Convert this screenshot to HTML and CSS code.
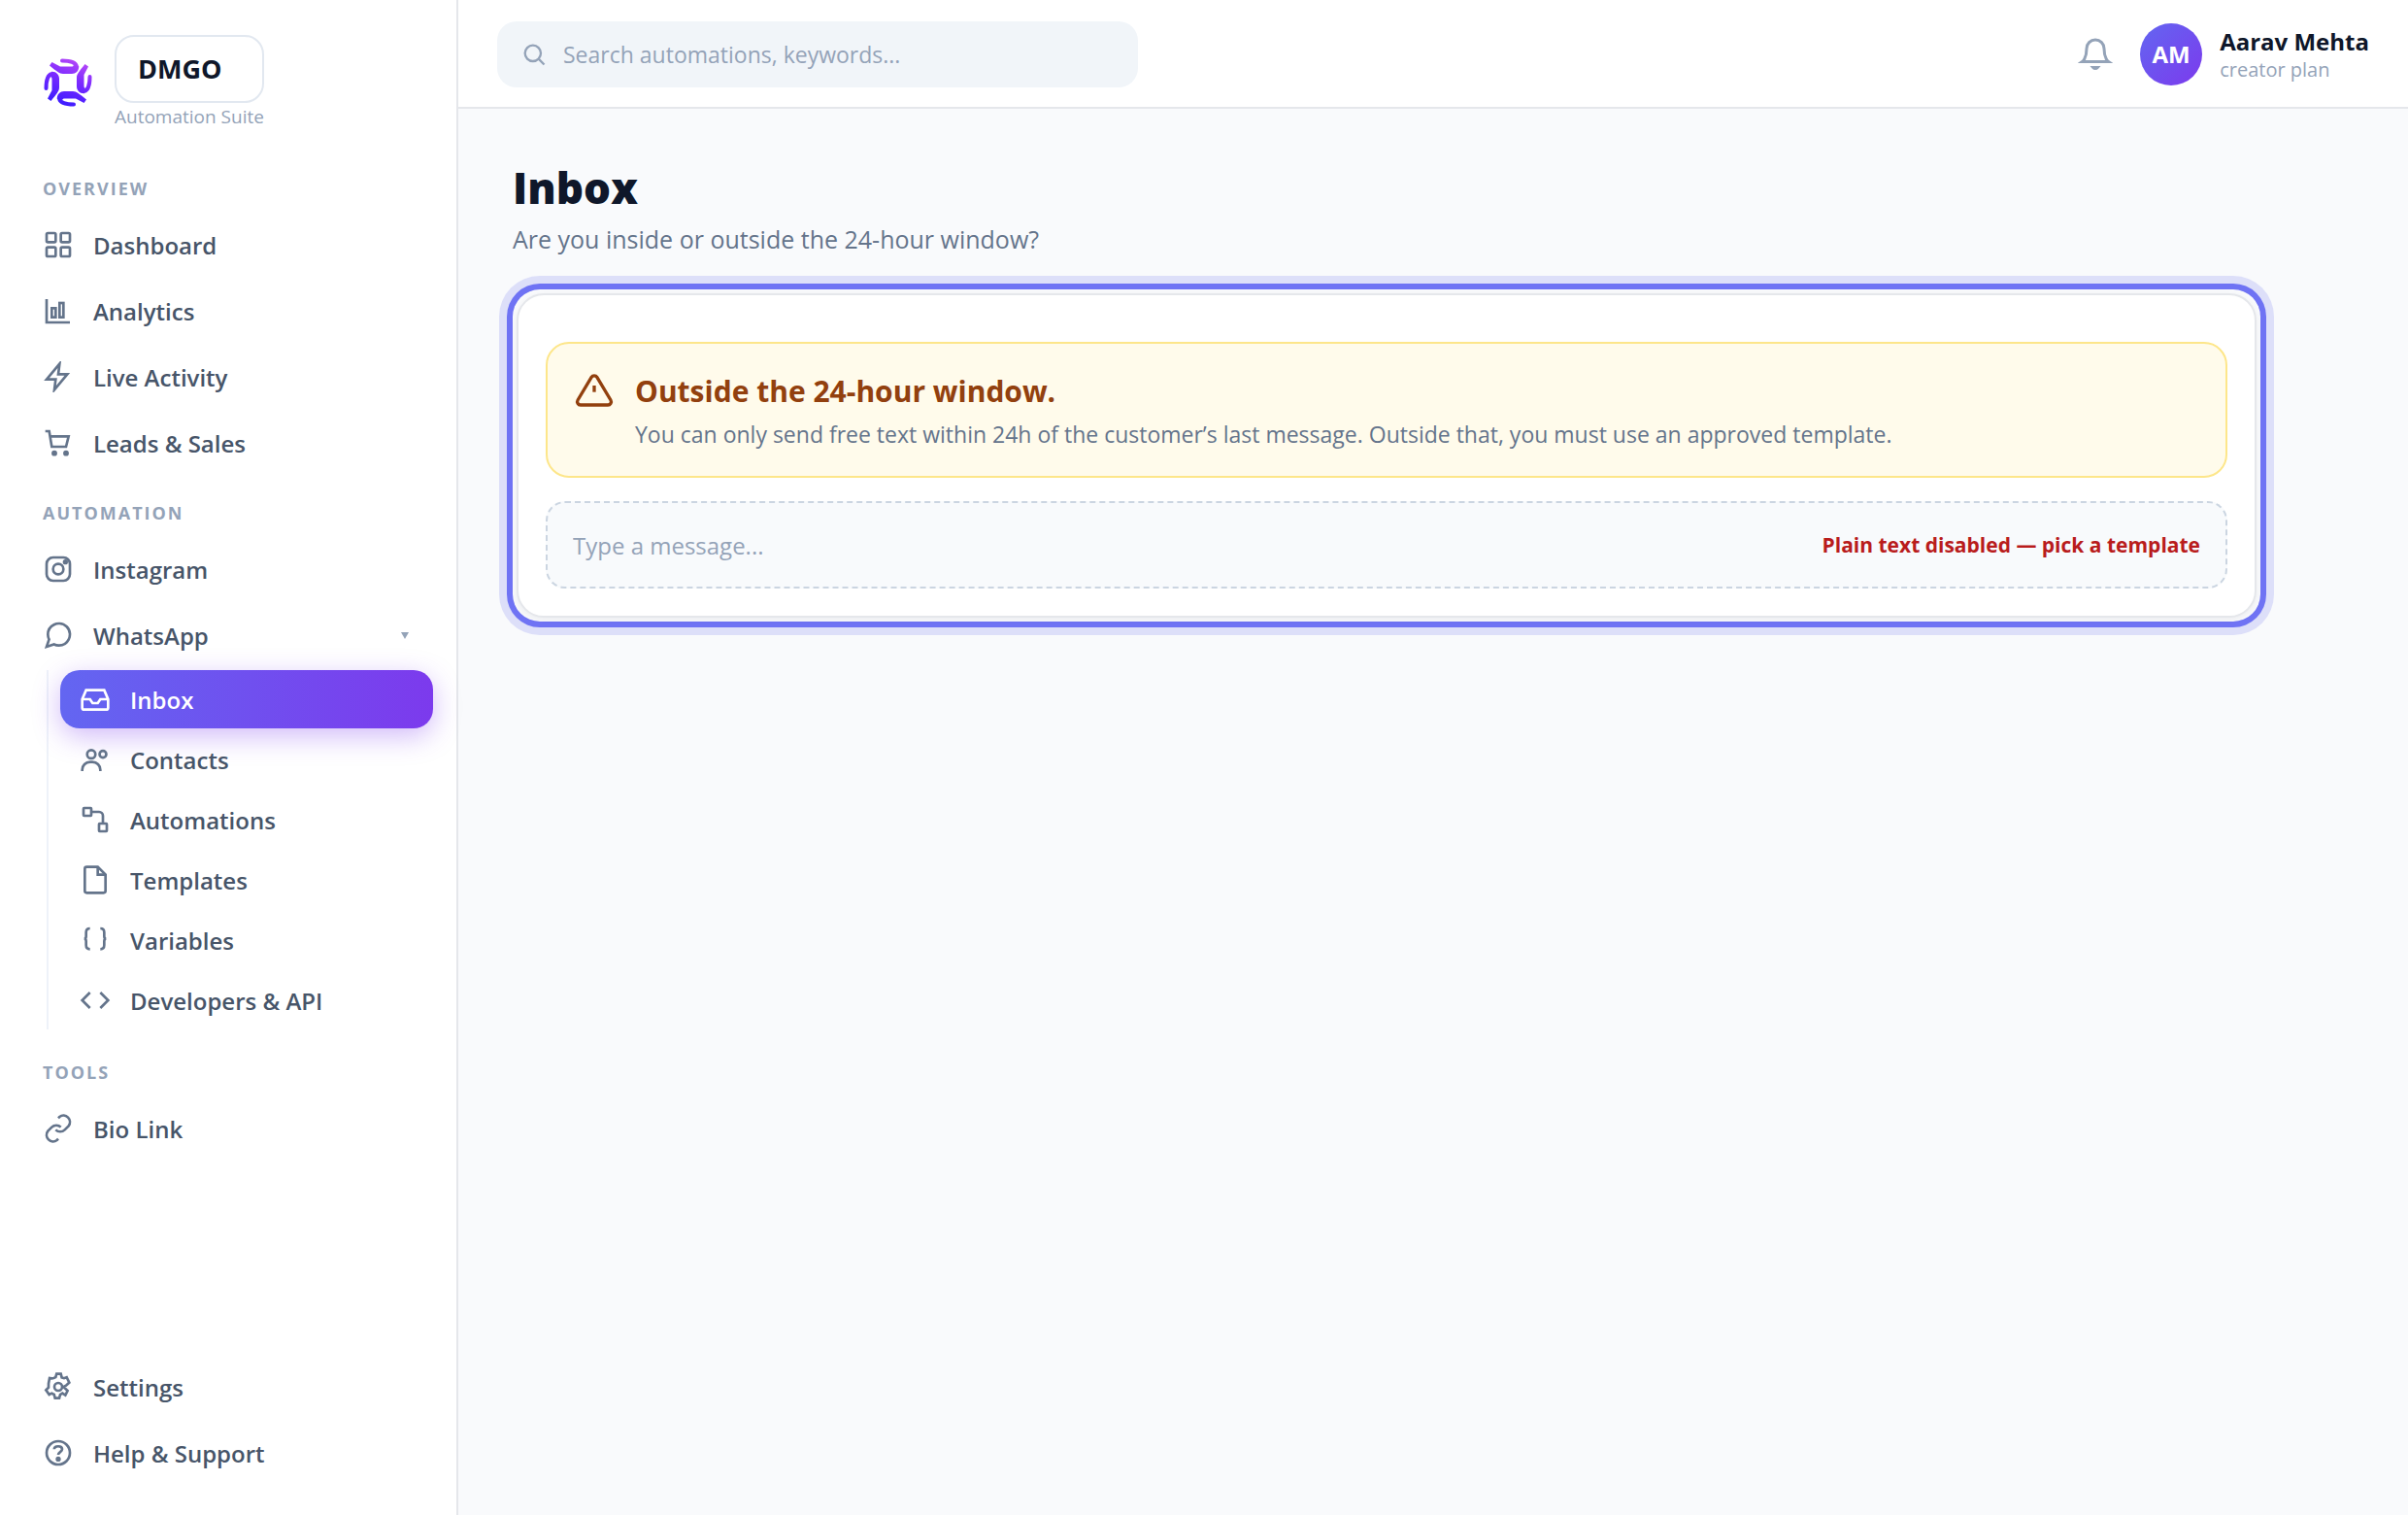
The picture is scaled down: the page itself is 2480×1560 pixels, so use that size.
FILE: index.html
```html
<!DOCTYPE html>
<html lang="en">
<head>
    <meta charset="UTF-8">
    <meta name="viewport" content="width=device-width, initial-scale=1.0">
    <title>DMGO - Inbox</title>
    <link rel="stylesheet" href="styles.css">
</head>
<body>
    <div class="app">
        <!-- Sidebar -->
        <aside class="sidebar">
            <div class="brand">
                <svg class="brand-mark" viewBox="-26 -26 52 52" aria-hidden="true">
                    <defs>
                        <linearGradient id="markFill" gradientUnits="userSpaceOnUse" x1="8" y1="-22" x2="-8" y2="22">
                            <stop offset="0" stop-color="#b145f8"/>
                            <stop offset="0.4" stop-color="#7d2bff"/>
                            <stop offset="1" stop-color="#3d1cff"/>
                        </linearGradient>
                        <g id="markArm">
                            <path d="M17.5 -19 L21 -16.5 L16.5 -8 V3 C16.5 5 17 6 18 5.5 L17 11.2 C12 11.5 9 8 9 4 V-5 C9 -9 12 -12 17.5 -19Z" fill="#fff"/>
                            <path d="M17 8.8 C20.5 8 22.5 2 22.5 -6" fill="none" stroke="#fff" stroke-width="4" stroke-linecap="round"/>
                        </g>
                        <mask id="markMask" maskUnits="userSpaceOnUse" x="-26" y="-26" width="52" height="52">
                            <use href="#markArm"/>
                            <use href="#markArm" transform="rotate(90)"/>
                            <use href="#markArm" transform="rotate(180)"/>
                            <use href="#markArm" transform="rotate(270)"/>
                        </mask>
                    </defs>
                    <rect x="-26" y="-26" width="52" height="52" fill="url(#markFill)" mask="url(#markMask)"/>
                </svg>
                <div class="brand-text">
                    <div class="brand-name">DMGO</div>
                    <div class="brand-sub">Automation Suite</div>
                </div>
            </div>

            <nav class="nav">
                <h2 class="nav-label">Overview</h2>
                <a class="nav-item" href="#">
                    <svg class="icon" viewBox="0 0 24 24"><rect x="3" y="3" width="7" height="7" rx="1"/><rect x="14" y="3" width="7" height="7" rx="1"/><rect x="3" y="14" width="7" height="7" rx="1"/><rect x="14" y="14" width="7" height="7" rx="1"/></svg>
                    Dashboard
                </a>
                <a class="nav-item" href="#">
                    <svg class="icon" viewBox="0 0 24 24"><path d="M3 3v18h18"/><rect x="7" y="10" width="3" height="7"/><rect x="13" y="6" width="3" height="11"/></svg>
                    Analytics
                </a>
                <a class="nav-item" href="#">
                    <svg class="icon" viewBox="0 0 24 24"><path d="M13 2 3 14h7l-1 8 10-12h-7z"/></svg>
                    Live Activity
                </a>
                <a class="nav-item" href="#">
                    <svg class="icon" viewBox="0 0 24 24"><path d="M2 3h3l2 12h11l2-8H6"/><circle class="dot" cx="9" cy="20" r="1.2"/><circle class="dot" cx="18" cy="20" r="1.2"/></svg>
                    Leads &amp; Sales
                </a>

                <h2 class="nav-label">Automation</h2>
                <a class="nav-item" href="#">
                    <svg class="icon" viewBox="0 0 24 24"><rect x="3" y="3" width="18" height="18" rx="5"/><circle cx="12" cy="12" r="4"/><circle class="dot" cx="17.5" cy="6.5" r="1"/></svg>
                    Instagram
                </a>
                <button class="nav-item" type="button" aria-expanded="true">
                    <svg class="icon" viewBox="0 0 24 24"><path d="M21 11.5a8.38 8.38 0 0 1-.9 3.8 8.5 8.5 0 0 1-7.6 4.7 8.38 8.38 0 0 1-3.8-.9L3 21l1.9-5.7a8.38 8.38 0 0 1-.9-3.8 8.5 8.5 0 0 1 4.7-7.6 8.38 8.38 0 0 1 3.8-.9h.5a8.48 8.48 0 0 1 8 8v.5z"/></svg>
                    WhatsApp
                    <svg class="caret" viewBox="0 0 8 7" aria-hidden="true"><path d="M0 0h8L4 7z"/></svg>
                </button>
                <div class="subnav">
                    <a class="nav-item active" href="#" aria-current="page">
                        <svg class="icon" viewBox="0 0 24 24"><path d="M2 12h6l2 3h4l2-3h6"/><path d="M5 5h14l3 7v6.5a1.5 1.5 0 0 1-1.5 1.5h-17A1.5 1.5 0 0 1 2 18.5V12z"/></svg>
                        Inbox
                    </a>
                    <a class="nav-item" href="#">
                        <svg class="icon" viewBox="0 0 24 24"><circle cx="9" cy="8" r="3.2"/><circle cx="18" cy="8" r="2.6"/><path d="M2 21v-1a6 6 0 0 1 6-6h2a6 6 0 0 1 6 6v1"/></svg>
                        Contacts
                    </a>
                    <a class="nav-item" href="#">
                        <svg class="icon" viewBox="0 0 24 24"><rect x="3" y="3" width="6" height="6" rx="0.5"/><rect x="15" y="15" width="6" height="6" rx="0.5"/><path d="M9 6h6a3 3 0 0 1 3 3v6"/></svg>
                        Automations
                    </a>
                    <a class="nav-item" href="#">
                        <svg class="icon" viewBox="0 0 24 24"><path d="M14 2H5.500A1.5 1.5 0 0 0 4 3.5v17A1.5 1.5 0 0 0 5.500 22h13a1.5 1.5 0 0 0 1.5-1.5V8z"/><path d="M14 2v6h6"/></svg>
                        Templates
                    </a>
                    <a class="nav-item" href="#">
                        <svg class="icon" viewBox="0 0 24 24"><path d="M8 3C6 3 5 4 5 6v3c0 1-.5 2-1.5 2C4.500 11 5 12 5 13v3c0 2 1 3 3 3"/><path d="M16 3c2 0 3 1 3 3v3c0 1 .5 2 1.5 2-1 0-1.5 1-1.5 2v3c0 2-1 3-3 3"/></svg>
                        Variables
                    </a>
                    <a class="nav-item" href="#">
                        <svg class="icon" viewBox="0 0 24 24"><path d="M8 6l-6 6 6 6"/><path d="M16 6l6 6-6 6"/></svg>
                        Developers &amp; API
                    </a>
                </div>

                <h2 class="nav-label">Tools</h2>
                <a class="nav-item" href="#">
                    <svg class="icon" viewBox="0 0 24 24"><path d="M10 13a5 5 0 0 0 7 0l3-3a5 5 0 0 0-7-7l-1 1"/><path d="M14 11a5 5 0 0 0-7 0l-3 3a5 5 0 0 0 7 7l1-1"/></svg>
                    Bio Link
                </a>
            </nav>

            <nav class="nav nav-bottom">
                <a class="nav-item" href="#">
                    <svg class="icon" viewBox="0 0 24 24"><circle cx="12" cy="12" r="3"/><path d="M10.7 2H14l.7 2.8 1.8.6 2-.7 2 4-2.5 2.3-2 1 3.2 3-1.7 3.5-2.3-1.5-1.7 1-.7 2.7H9.500L8.800 18 7 17l-2 1-2.500-3.500 2-2v-3L5.300 5.200l1.700.3 1.500-.2L10 4.500z"/></svg>
                    Settings
                </a>
                <a class="nav-item" href="#">
                    <svg class="icon" viewBox="0 0 24 24"><circle cx="12" cy="12" r="9"/><path d="M8.800 9.200C9 6.200 15 6.200 15 9.200c0 2-3 2.300-3 4.300"/><circle class="dot" cx="12" cy="16.800" r="1"/></svg>
                    Help &amp; Support
                </a>
            </nav>
        </aside>

        <div class="page">
            <!-- Top bar -->
            <header class="topbar">
                <label class="search">
                    <svg class="search-icon" viewBox="0 0 24 24" aria-hidden="true"><circle cx="11" cy="11" r="7"/><path d="M16 16l5 5"/></svg>
                    <input type="search" aria-label="Search" placeholder="Search automations, keywords...">
                </label>
                <div class="account">
                    <button class="bell" type="button" aria-label="Notifications">
                        <svg viewBox="0 0 24 24"><path d="M18 8a6 6 0 0 0-12 0c0 7-3 9-3 9h18s-3-2-3-9"/><path d="M13.500 21a2 2 0 0 1-3 0z"/></svg>
                    </button>
                    <div class="avatar">AM</div>
                    <div class="user">
                        <div class="user-name">Aarav Mehta</div>
                        <div class="user-plan">creator plan</div>
                    </div>
                </div>
            </header>

            <!-- Inbox -->
            <main class="content">
                <h1>Inbox</h1>
                <p class="subtitle">Are you inside or outside the 24-hour window?</p>

                <div class="highlight">
                    <section class="card">
                        <div class="notice">
                            <svg class="notice-icon" viewBox="0 0 24 24" aria-hidden="true"><path d="M10.290 3.860 1.820 18a2 2 0 0 0 1.710 3h16.940a2 2 0 0 0 1.710-3L13.710 3.860a2 2 0 0 0-3.420 0z"/><path d="M12 9v4"/></svg>
                            <div>
                                <h3>Outside the 24-hour window.</h3>
                                <p>You can only send free text within 24h of the customer’s last message. Outside that, you must use an approved template.</p>
                            </div>
                        </div>
                        <div class="composer">
                            <input type="text" aria-label="Message" placeholder="Type a message..." disabled>
                            <span class="composer-note">Plain text disabled — pick a template</span>
                        </div>
                    </section>
                </div>
            </main>
        </div>
    </div>
</body>
</html>
```
FILE: styles.css
```css
* {
    box-sizing: border-box;
}

body {
    margin: 0;
    font-family: "Segoe UI", "Open Sans", "Noto Sans", sans-serif;
    color: #0f172a;
    background-color: #f9fafc;
}

h1, h2, h3, p {
    margin: 0;
}

button, input {
    font-family: inherit;
}

.app {
    display: flex;
    min-height: 100vh;
}

/* Sidebar */
.sidebar {
    display: flex;
    flex-direction: column;
    flex: 0 0 472px;
    padding: 36px 24px 32px;
    background-color: #fff;
    border-right: 2px solid #e5e7eb;
}

.brand {
    display: flex;
    align-items: center;
    gap: 22px;
    padding: 0 20px 20px;
}

.brand-mark {
    width: 52px;
    height: 52px;
}

.brand-name {
    padding: 0 22px;
    border: 2px solid #e2e8f0;
    border-radius: 20px;
    font-size: 27px;
    font-weight: 700;
    line-height: 66px;
}

.brand-sub {
    font-size: 19px;
    line-height: 28px;
    color: #94a3b8;
}

.nav {
    display: flex;
    flex-direction: column;
    gap: 4px;
}

.nav-bottom {
    margin-top: auto;
}

.nav-label {
    padding: 24px 20px 10px;
    font-size: 18px;
    font-weight: 700;
    line-height: 24px;
    letter-spacing: 2px;
    text-transform: uppercase;
    color: #94a3b8;
}

.nav-label:first-child {
    padding-top: 28px;
}

.nav-item {
    display: flex;
    align-items: center;
    gap: 20px;
    width: 100%;
    height: 64px;
    padding: 0 20px;
    border: none;
    background: none;
    font-size: 24px;
    font-weight: 600;
    text-align: left;
    text-decoration: none;
    color: #475569;
    cursor: pointer;
}

.icon {
    flex: none;
    width: 32px;
    height: 32px;
    fill: none;
    stroke: #64748b;
    stroke-width: 2;
}

.icon .dot {
    fill: #64748b;
}

.caret {
    width: 8px;
    height: 7px;
    margin-left: auto;
    margin-right: 5px;
    fill: #94a3b8;
}

.subnav {
    display: flex;
    flex-direction: column;
    gap: 2px;
    margin-left: 24px;
    margin-bottom: 4px;
    padding-left: 12px;
    border-left: 2px solid #eef2f9;
}

.subnav .nav-item {
    height: 60px;
}

.subnav .active {
    border-radius: 20px;
    color: #fff;
    background: linear-gradient(90deg, #6366f1, #7c3aed);
    box-shadow: 0 8px 28px rgba(124, 58, 237, 0.35);
}

.active .icon {
    stroke: #fff;
}

/* Top bar */
.page {
    flex: 1;
    min-width: 0;
}

.topbar {
    display: flex;
    align-items: center;
    justify-content: space-between;
    gap: 40px;
    padding: 22px 40px 20px;
    background-color: #fff;
    border-bottom: 2px solid #e5e7eb;
}

.search {
    display: flex;
    align-items: center;
    gap: 16px;
    flex: 0 1 660px;
    height: 68px;
    padding: 0 24px;
    border-radius: 20px;
    background-color: #f1f5f9;
}

.search-icon {
    flex: none;
    width: 28px;
    height: 28px;
    fill: none;
    stroke: #94a3b8;
    stroke-width: 2;
}

.search input {
    flex: 1;
    min-width: 0;
    padding: 0;
    border: none;
    outline: none;
    background: none;
    font-size: 23px;
}

input::placeholder {
    color: #94a3b8;
}

.account {
    display: flex;
    align-items: center;
}

.bell {
    width: 36px;
    height: 36px;
    margin-right: 28px;
    padding: 0;
    border: none;
    background: none;
    cursor: pointer;
}

.bell svg {
    display: block;
    fill: none;
    stroke: #94a3b8;
    stroke-width: 2;
}

.avatar {
    width: 64px;
    height: 64px;
    margin-right: 18px;
    border-radius: 50%;
    background: linear-gradient(135deg, #6366f1, #7c3aed);
    font-size: 24px;
    font-weight: 700;
    line-height: 64px;
    text-align: center;
    color: #fff;
}

.user-name {
    font-size: 24px;
    font-weight: 700;
    line-height: 32px;
}

.user-plan {
    font-size: 20px;
    line-height: 26px;
    color: #94a3b8;
}

/* Content */
.content {
    max-width: 1912px;
    padding: 52px 56px;
}

h1 {
    font-size: 44px;
    font-weight: 800;
    line-height: 58px;
}

.subtitle {
    margin-top: 6px;
    font-size: 25px;
    line-height: 36px;
    color: #64748b;
}

.highlight {
    margin-top: 34px;
    padding: 4px;
    border-radius: 28px;
    box-shadow: 0 0 0 6px #6f73f4, 0 0 0 14px #dddff9;
}

.card {
    display: flex;
    flex-direction: column;
    gap: 24px;
    padding: 48px 28px 28px;
    border: 2px solid #e5e7eb;
    border-radius: 28px;
    background-color: #fff;
    box-shadow: 0 2px 6px rgba(15, 23, 42, 0.06);
}

.notice {
    display: flex;
    gap: 22px;
    padding: 28px;
    border: 2px solid #fde68a;
    border-radius: 24px;
    background-color: #fffbeb;
}

.notice-icon {
    flex: none;
    width: 40px;
    height: 40px;
    fill: none;
    stroke: #92400e;
    stroke-width: 2;
}

.notice h3 {
    font-size: 30px;
    font-weight: 700;
    line-height: 42px;
    color: #92400e;
}

.notice p {
    margin-top: 8px;
    font-size: 23px;
    line-height: 30px;
    color: #64748b;
}

.composer {
    display: flex;
    align-items: center;
    gap: 24px;
    height: 90px;
    padding: 0 26px;
    border: 2px dashed #cbd5e1;
    border-radius: 20px;
    background-color: #f8fafc;
}

.composer input {
    flex: 1;
    min-width: 0;
    padding: 0;
    border: none;
    background: none;
    font-size: 24px;
}

.composer-note {
    font-size: 21px;
    font-weight: 700;
    color: #b91c1c;
}
```
